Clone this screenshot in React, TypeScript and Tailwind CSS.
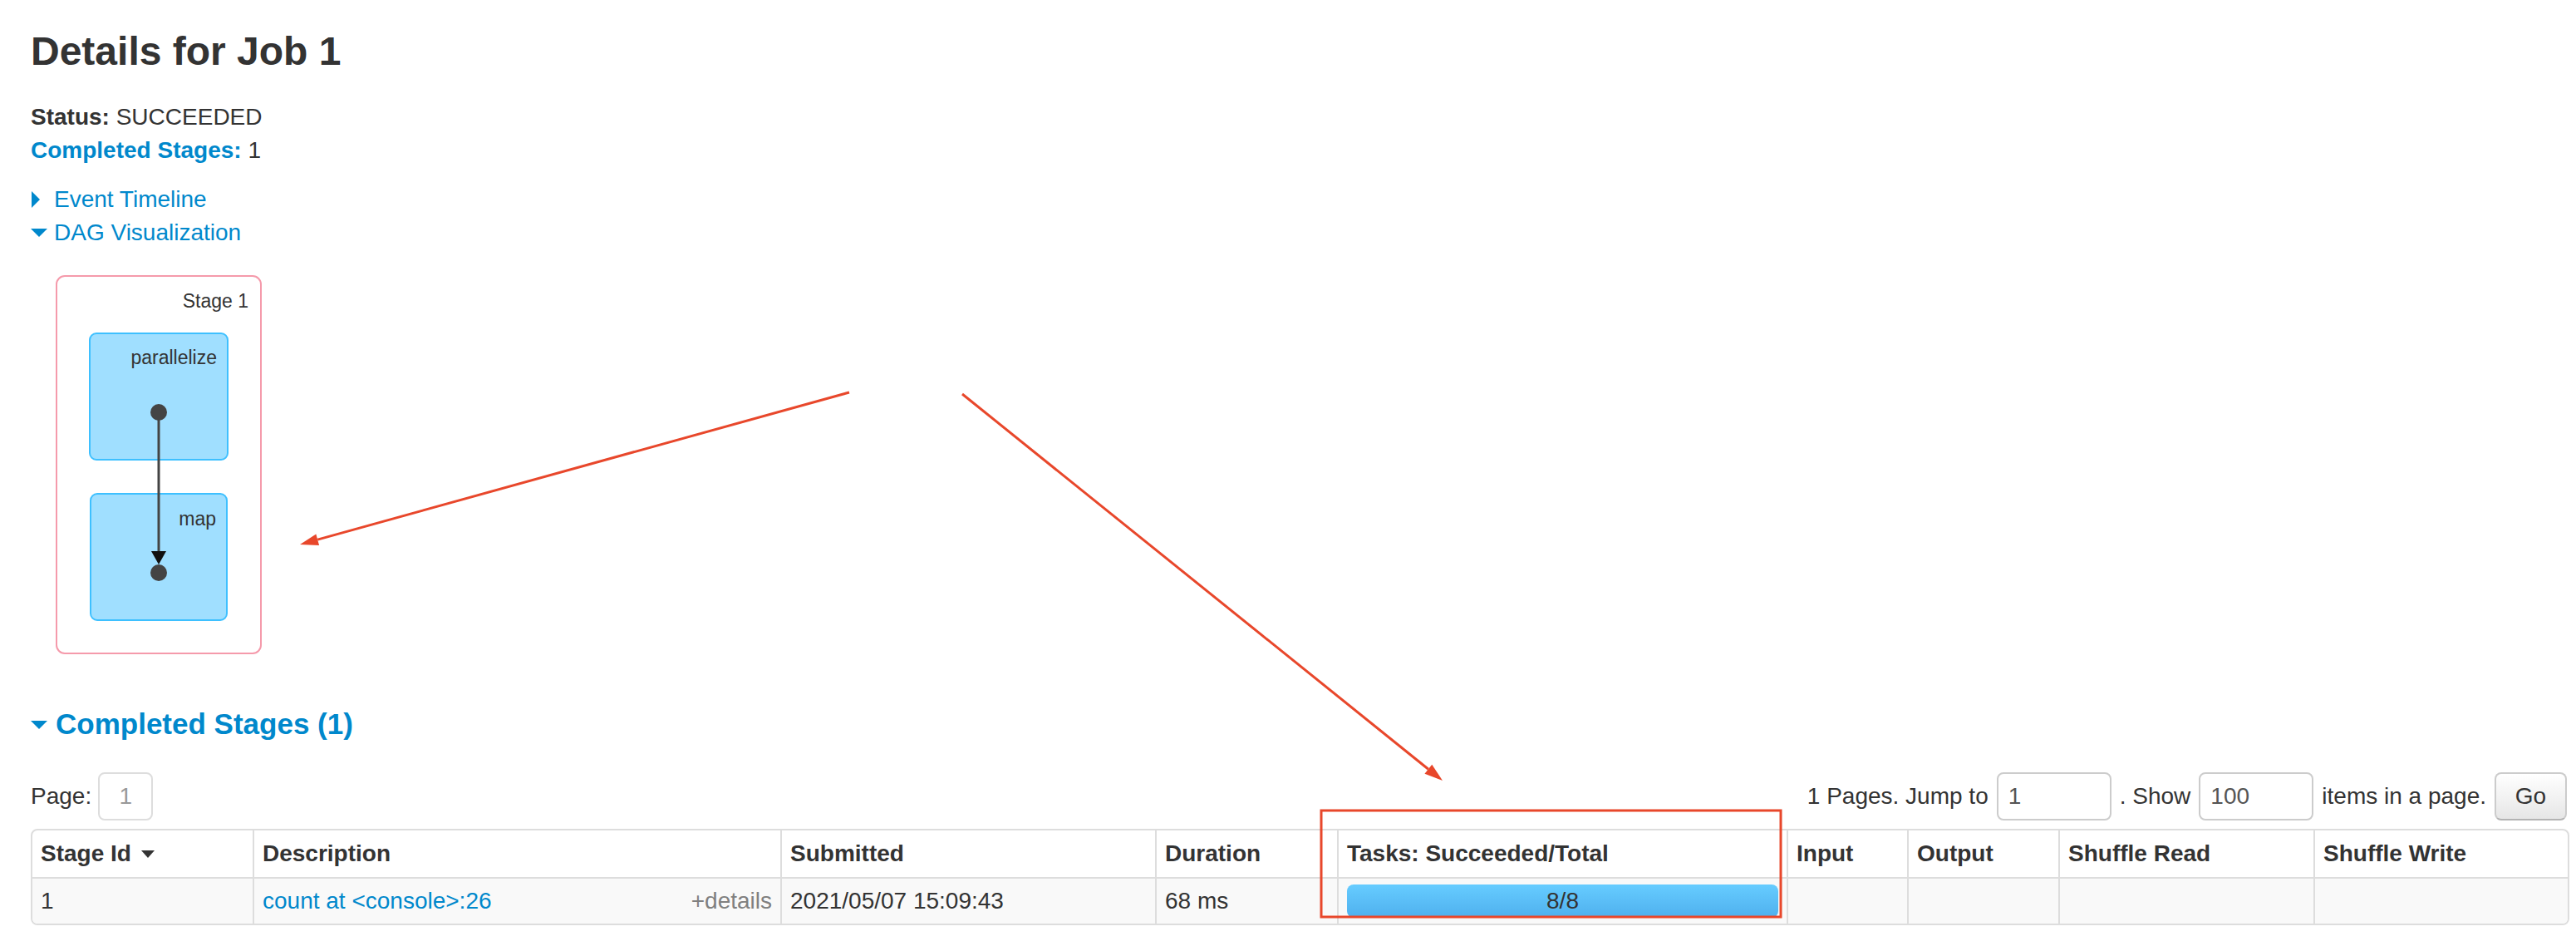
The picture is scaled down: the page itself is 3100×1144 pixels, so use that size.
import React from 'react';

const stages = [
  {
    id: 1,
    description: 'count at <console>:26',
    submitted: '2021/05/07 15:09:43',
    duration: '68 ms',
    succeeded: 8,
    total: 8,
  },
];

const columns = [
  { label: 'Stage Id', width: 265, sorted: true },
  { label: 'Description', width: 635 },
  { label: 'Submitted', width: 451 },
  { label: 'Duration', width: 219 },
  { label: 'Tasks: Succeeded/Total', width: 541 },
  { label: 'Input', width: 145 },
  { label: 'Output', width: 182 },
  { label: 'Shuffle Read', width: 307 },
  { label: 'Shuffle Write', width: 306 },
];

function ArrowOpen() {
  return <span className="inline-block h-0 w-0 border-x-[10px] border-t-[10px] border-x-transparent border-t-[#0088cc]" />;
}

function ArrowClosed() {
  return <span className="ml-[1px] inline-block h-0 w-0 border-y-[10px] border-l-[10px] border-y-transparent border-l-[#0088cc]" />;
}

// red annotation arrow: line plus a filled head at (x2, y2)
function Pointer({ x1, y1, x2, y2 }: { x1: number; y1: number; x2: number; y2: number }) {
  const dx = x2 - x1;
  const dy = y2 - y1;
  const len = Math.sqrt(dx * dx + dy * dy);
  const ux = dx / len;
  const uy = dy / len;
  const bx = x2 - ux * 22;
  const by = y2 - uy * 22;
  const nx = -uy * 7;
  const ny = ux * 7;
  return (
    <g>
      <line x1={x1} y1={y1} x2={bx} y2={by} stroke="#e8472b" strokeWidth={3} />
      <polygon points={`${x2},${y2} ${bx + nx},${by + ny} ${bx - nx},${by - ny}`} fill="#e8472b" />
    </g>
  );
}

function DagViz() {
  return (
    <svg width="300" height="500" className="block" fontFamily="'Liberation Sans', Arial, sans-serif">
      <rect x="31" y="32" width="246" height="454" rx="10" fill="#fff" stroke="#f59aab" strokeWidth="2" />
      <text x="262" y="70" textAnchor="end" fontSize="23" fill="#333">Stage 1</text>

      <rect x="71" y="101" width="166" height="152" rx="8" fill="#a0dfff" stroke="#3ec0ff" strokeWidth="2" />
      <text x="224" y="138" textAnchor="end" fontSize="23" fill="#333">parallelize</text>

      <rect x="72" y="294" width="164" height="152" rx="8" fill="#a0dfff" stroke="#3ec0ff" strokeWidth="2" />
      <text x="223" y="332" textAnchor="end" fontSize="23" fill="#333">map</text>

      <line x1="154" y1="196" x2="154" y2="366" stroke="#444" strokeWidth="3" />
      <polygon points="145,363 163,363 154,379" fill="#111" />
      <circle cx="154" cy="196" r="10" fill="#444" />
      <circle cx="154" cy="389" r="10" fill="#444" />
    </svg>
  );
}

export default function App() {
  return (
    <div className="relative min-h-screen w-full bg-white font-['Liberation_Sans',Arial,sans-serif] text-[28px] leading-[40px] text-[#333]">
      <div className="pl-[37px] pr-[11px]">
        <h3 className="pt-[22px] text-[48px] leading-[80px] font-bold">Details for Job 1</h3>

        <ul className="mt-[19px]">
          <li>
            <strong>Status:</strong> SUCCEEDED
          </li>
          <li>
            <a className="font-bold text-[#0088cc]">Completed Stages:</a> 1
          </li>
        </ul>

        <div className="mt-[19px]">
          <div className="flex items-center">
            <span className="flex w-[28px] items-center">
              <ArrowClosed />
            </span>
            <a className="text-[#0088cc]">Event Timeline</a>
          </div>
          <div className="flex items-center">
            <span className="flex w-[28px] items-center">
              <ArrowOpen />
            </span>
            <a className="text-[#0088cc]">DAG Visualization</a>
          </div>
        </div>

        <DagViz />

        <h4 className="mt-[51px] flex items-center text-[35px] leading-[40px] font-bold text-[#0088cc]">
          <span className="flex w-[30px] items-center pt-[2px]">
            <ArrowOpen />
          </span>
          Completed Stages (1)
        </h4>

        <div className="mt-[38px] flex h-[58px] items-center justify-between">
          <div className="flex items-center gap-[8px]">
            <span>Page:</span>
            <span className="flex h-[58px] w-[66px] items-center justify-center rounded-[8px] border-2 border-[#ddd] text-[#999]">
              1
            </span>
          </div>
          <div className="flex items-center gap-[10px]">
            <span>1 Pages. Jump to</span>
            <span className="flex h-[58px] w-[138px] items-center rounded-[8px] border-2 border-[#ccc] px-[12px] text-[#555]">1</span>
            <span>. Show</span>
            <span className="flex h-[58px] w-[138px] items-center rounded-[8px] border-2 border-[#ccc] px-[12px] text-[#555]">100</span>
            <span>items in a page.</span>
            <button className="flex h-[58px] w-[87px] items-center justify-center rounded-[8px] border-2 border-[#ccc] border-b-[#b3b3b3] bg-gradient-to-b from-white to-[#e6e6e6] text-[#333]">
              Go
            </button>
          </div>
        </div>

        <table className="mt-[10px] w-full table-fixed border-separate border-spacing-0 overflow-hidden rounded-[8px] border-2 border-[#ddd]">
          <colgroup>
            {columns.map((c) => (
              <col key={c.label} style={{ width: c.width }} />
            ))}
          </colgroup>
          <thead>
            <tr>
              {columns.map((c, i) => (
                <th
                  key={c.label}
                  className={`px-[10px] py-[8px] text-left font-bold whitespace-nowrap ${i > 0 ? 'border-l-2 border-[#ddd]' : ''}`}
                >
                  {c.label}
                  {c.sorted && <span className="ml-[12px] inline-block h-0 w-0 -translate-y-[4px] border-x-[8px] border-t-[9px] border-x-transparent border-t-[#333]" />}
                </th>
              ))}
            </tr>
          </thead>
          <tbody>
            {stages.map((s) => (
              <tr key={s.id} className="bg-[#f9f9f9]">
                <td className="border-t-2 border-[#ddd] px-[10px] py-[7px]">{s.id}</td>
                <td className="border-t-2 border-l-2 border-[#ddd] px-[10px] py-[7px]">
                  <div className="flex justify-between">
                    <a className="text-[#0088cc]">{s.description}</a>
                    <span className="text-[#808080]">+details</span>
                  </div>
                </td>
                <td className="border-t-2 border-l-2 border-[#ddd] px-[10px] py-[7px]">{s.submitted}</td>
                <td className="border-t-2 border-l-2 border-[#ddd] px-[10px] py-[7px]">{s.duration}</td>
                <td className="border-t-2 border-l-2 border-[#ddd] px-[10px] py-[7px]">
                  <div className="flex h-[40px] w-full items-center justify-center rounded-[8px] bg-gradient-to-b from-[#66ccff] to-[#4fb0ee] text-[#333]">
                    {s.succeeded}/{s.total}
                  </div>
                </td>
                <td className="border-t-2 border-l-2 border-[#ddd] px-[10px] py-[7px]" />
                <td className="border-t-2 border-l-2 border-[#ddd] px-[10px] py-[7px]" />
                <td className="border-t-2 border-l-2 border-[#ddd] px-[10px] py-[7px]" />
                <td className="border-t-2 border-l-2 border-[#ddd] px-[10px] py-[7px]" />
              </tr>
            ))}
          </tbody>
        </table>
      </div>

      {/* annotation overlay */}
      <svg className="pointer-events-none absolute top-0 left-0" width="3100" height="1144">
        <Pointer x1={1022} y1={472} x2={361} y2={655} />
        <Pointer x1={1158} y1={474} x2={1736} y2={939} />
        <rect x="1590" y="975" width="553" height="128" fill="none" stroke="#e8472b" strokeWidth="3" />
      </svg>
    </div>
  );
}
